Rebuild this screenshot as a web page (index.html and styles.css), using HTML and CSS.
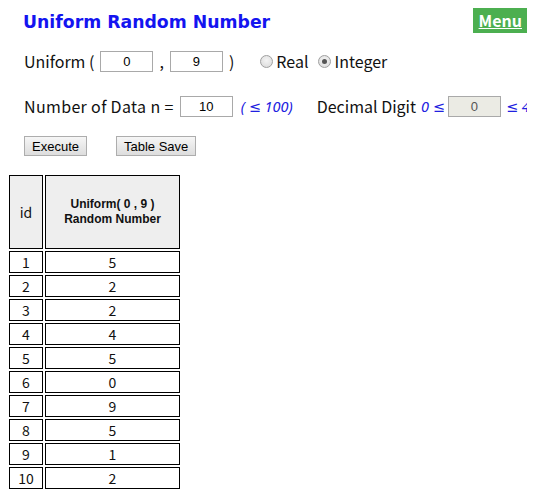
FILE: index.html
```html
<!DOCTYPE html>
<html>
<head>
<meta charset="utf-8">
<link rel="stylesheet" href="styles.css">
</head>
<body>
<div class="header">
  <h1 class="title">Uniform Random Number</h1>
  <a class="menu" href="#">Menu</a>
</div>
<div class="row row1">
  <span>Uniform (</span>
  <input class="num" type="text" value="0">
  <span>,</span>
  <input class="num" type="text" value="9">
  <span>)</span>
  <label class="radio first"><input type="radio" name="t">Real</label>
  <label class="radio"><input type="radio" name="t" checked>Integer</label>
</div>
<div class="row row2">
  <span class="ndata">Number of Data n =</span>
  <input class="num" type="text" value="10">
  <span class="note">( ≤ 100)</span>
  <span class="dec">Decimal Digit</span>
  <span class="note">0 ≤</span>
  <input class="num disabled" type="text" value="0" disabled>
  <span class="note last">≤ 4</span>
</div>
<div class="buttons">
  <button class="btn">Execute</button>
  <button class="btn save">Table Save</button>
</div>
<table class="data">
  <thead>
    <tr><th class="idh">id</th><th class="valh"><div class="hl">Uniform( 0 , 9 )</div><div class="hl">Random Number</div></th></tr>
  </thead>
  <tbody>
    <tr><td>1</td><td>5</td></tr>
    <tr><td>2</td><td>2</td></tr>
    <tr><td>3</td><td>2</td></tr>
    <tr><td>4</td><td>4</td></tr>
    <tr><td>5</td><td>5</td></tr>
    <tr><td>6</td><td>0</td></tr>
    <tr><td>7</td><td>9</td></tr>
    <tr><td>8</td><td>5</td></tr>
    <tr><td>9</td><td>1</td></tr>
    <tr><td>10</td><td>2</td></tr>
  </tbody>
</table>
</body>
</html>
```
FILE: styles.css
```css
body {
  margin: 8px;
  font-family: "Noto Sans CJK KR", "Noto Sans", sans-serif;
  font-size: 16px;
  color: #111;
  background: #fff;
}
.header {
  display: flex;
  justify-content: space-between;
  align-items: flex-start;
  height: 36px;
}
.title {
  margin: 2px 0 0 15px;
  font-family: "DejaVu Sans", sans-serif;
  font-size: 17.3px;
  font-weight: bold;
  line-height: 24px;
  color: #1414f0;
}
.menu {
  margin-right: -1px;
  background: #4caf50;
  color: #fff;
  font-weight: bold;
  font-size: 16px;
  line-height: 25px;
  height: 25px;
  padding: 0 6px;
  text-decoration: underline;
}
.row {
  display: flex;
  align-items: center;
  padding-left: 16px;
  height: 22px;
  white-space: nowrap;
}
.row > * { flex-shrink: 0; }
.row1 { margin-top: 6px; }
.row2 { margin-top: 23px; }
.ndata { letter-spacing: 0.35px; }
.num {
  box-sizing: border-box;
  width: 53px;
  height: 21px;
  border: 1px solid #a9a9a9;
  font-family: "Liberation Sans", sans-serif;
  font-size: 13px;
  text-align: center;
  padding: 0;
  margin: 0 6px;
  color: #000;
  background: #fff;
}
.num.disabled {
  background: #ebebe4;
  color: #555;
  margin: 0 5px 0 3px;
}
.radio {
  display: inline-flex;
  align-items: center;
}
.radio.first { margin-left: 26px; }
.radio input {
  appearance: none;
  -webkit-appearance: none;
  box-sizing: border-box;
  margin: 0 3px 0 0;
  width: 13px;
  height: 13px;
  border-radius: 50%;
  border: 1px solid #a0a0a0;
  background: radial-gradient(circle at 50% 40%, #f4f4f4, #d8d8d8);
  position: relative;
}
.radio input:checked::after {
  content: "";
  position: absolute;
  left: 3px;
  top: 3px;
  width: 5px;
  height: 5px;
  border-radius: 50%;
  background: #555;
}
.radio + .radio { margin-left: 10px; }
.note {
  color: #2020e0;
  font-family: "Noto Sans", "DejaVu Sans", sans-serif;
  font-style: italic;
  font-size: 14.5px;
}
.row2 .num:first-of-type { margin-right: 8px; }
.dec { margin-left: 24px; margin-right: 5px; }
.buttons {
  margin-top: 19px;
  padding-left: 16px;
  display: flex;
  gap: 29px;
}
.btn {
  box-sizing: border-box;
  height: 20px;
  padding: 0 7px;
  font-family: "Liberation Sans", sans-serif;
  font-size: 13px;
  color: #000;
  border: 1px solid #adadad;
  border-radius: 0;
  background: linear-gradient(#f6f6f6, #dddddd);
}
.data {
  margin-top: 17px;
  margin-left: -1px;
  border-collapse: separate;
  border-spacing: 2px;
}
.data th, .data td {
  border: 1px solid #000;
  text-align: center;
  padding: 0;
}
.data th {
  background: #eeeeee;
  height: 72px;
}
.idh { width: 32px; font-weight: normal; font-size: 14px; }
.valh {
  width: 133px;
  font-family: "Liberation Sans", sans-serif;
  font-size: 12px;
  font-weight: bold;
  color: #111;
}
.hl { line-height: 15px; height: 15px; }
.data td {
  height: 20px;
  font-size: 14px;
  line-height: 20px;
}
```
